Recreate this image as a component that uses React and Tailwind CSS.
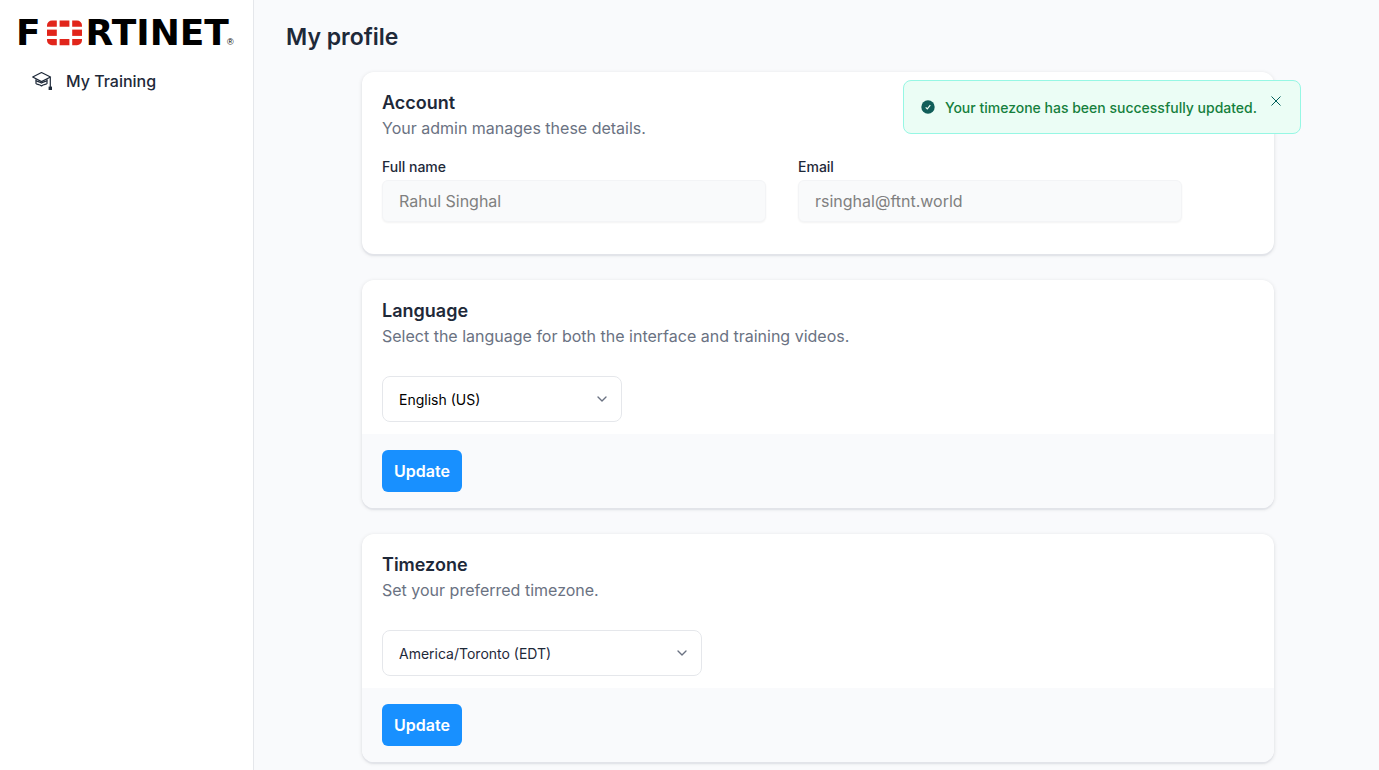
import React, { useState } from 'react';
import { ChevronDown } from 'lucide-react';

function Logo() {
  return (
    <a
      href="#"
      aria-label="Fortinet"
      className="flex items-start font-['DejaVu_Sans'] text-4xl leading-[26px] font-bold text-black"
    >
      <span>F</span>
      <svg className="mr-1 ml-1.5 h-[26px] w-[35px] shrink-0" viewBox="0 0 35 26" fill="#e1251b">
        <path d="M5 0.500h4.800v6.200H0V5.500a5 5 0 0 1 5-5z" />
        <path d="M12.600 0.500h9.800v6.200h-9.800z" />
        <path d="M25.200 0.500H30a5 5 0 0 1 5 5v1.200h-9.800z" />
        <path d="M0 9.600h9.800v6.300H0z" />
        <path d="M25.200 9.600H35v6.300h-9.800z" />
        <path d="M0 18.900h9.800v6.300H5a5 5 0 0 1-5-5z" />
        <path d="M12.600 18.900h9.800v6.300h-9.800z" />
        <path d="M25.200 18.900H35v1.300a5 5 0 0 1-5 5h-4.800z" />
      </svg>
      <span>RTINET</span>
      <span className="-ml-0.5 self-end font-['Liberation_Sans'] text-[9px] leading-2 font-normal">®</span>
    </a>
  );
}

function GraduationIcon() {
  return (
    <svg
      className="h-5 w-5"
      viewBox="0 0 20 20"
      fill="none"
      stroke="currentColor"
      strokeWidth="1.2"
      strokeLinejoin="round"
    >
      <path d="M9.500 1.500 18.500 6l-9 4.600L.7 6z" />
      <path d="M4 9.500c.3 1 2.500.6 5.500 2.600 3-2 5.200-1.600 5.500-2.600" />
      <path d="M4 8.200v4.300c.8 1.200 3 .5 5.500 2.500 2.500-2 4.700-1.300 5.500-2.500V8.200" />
      <path d="M18.300 6.300V16" />
      <path d="M16.600 15.600H20V19h-3.400z" fill="currentColor" stroke="none" />
    </svg>
  );
}

function Card({ title, description, footer, children }) {
  return (
    <section className="overflow-hidden rounded-xl bg-white shadow-[0_2px_1px_#e2e4e9,0_1px_4px_rgba(0,0,0,0.12)]">
      <div className="px-5 pt-[18px]">
        <h2 className="text-lg leading-[26px] font-semibold text-gray-800">{title}</h2>
        <p className="text-base leading-6 text-gray-500">{description}</p>
        {children}
      </div>
      {footer && <div className="bg-[#f9fafc] px-5 py-4">{footer}</div>}
    </section>
  );
}

function ReadOnlyField({ id, label, value }) {
  return (
    <div>
      <label htmlFor={id} className="block text-sm leading-[18px] font-medium text-gray-800">
        {label}
      </label>
      <input
        id={id}
        value={value}
        disabled
        className="mt-1 block h-[42px] w-full rounded-md border border-gray-100 bg-[#f9fafb] px-4 text-base text-[#808080] shadow-xs"
      />
    </div>
  );
}

function SelectField({ label, value, className }) {
  return (
    <div className={`relative mt-7 mb-3 ${className}`}>
      <select
        aria-label={label}
        defaultValue={value}
        className="block h-[46px] w-full appearance-none rounded-lg border border-gray-200 bg-white px-4 pt-0.5 text-sm"
      >
        <option>{value}</option>
      </select>
      <ChevronDown className="pointer-events-none absolute top-[15px] right-3 h-4 w-4 text-gray-500" />
    </div>
  );
}

function UpdateButton() {
  return (
    <button type="button" className="h-[42px] rounded-md bg-[#1890ff] px-3 text-base font-semibold text-white">
      Update
    </button>
  );
}

function Toast({ message, onClose }) {
  return (
    <div
      role="status"
      className="absolute top-20 right-[78px] flex items-start rounded-lg border border-teal-200 bg-[#ebfdf5] px-[17px] pt-4 pb-3.5"
    >
      <svg className="mt-[3px] h-3.5 w-3.5" viewBox="0 0 14 14" fill="none">
        <circle cx="7" cy="7" r="6.700" fill="#115e59" />
        <path d="M4.700 7.300 6.300 8.900 9.300 5.200" stroke="#ebfdf5" strokeWidth="1.200" />
      </svg>
      <p className="ml-2.5 text-sm leading-[22px] font-medium text-[#15803d]">{message}</p>
      <button type="button" aria-label="Close" onClick={onClose} className="-mt-[7px] ml-3 py-1 text-teal-800">
        <svg className="h-3.5 w-3.5" viewBox="0 0 14 14" stroke="currentColor" strokeWidth="1">
          <path d="M2.500 2.500l9 9M11.500 2.500l-9 9" />
        </svg>
      </button>
    </div>
  );
}

export default function App() {
  const [showToast, setShowToast] = useState(true);

  return (
    <div className="relative flex min-h-screen bg-[#f9fafc] font-['Inter',sans-serif] text-gray-800">
      <aside className="w-[254px] shrink-0 border-r border-gray-200 bg-white pt-5">
        <div className="pl-4">
          <Logo />
        </div>
        <nav className="mt-[23px] px-8">
          <a href="#" className="flex items-center gap-3.5 text-base leading-6 font-medium">
            <GraduationIcon />
            My Training
          </a>
        </nav>
      </aside>

      <main className="min-w-0 flex-1 px-8 pt-5 pb-2">
        <h1 className="text-[23px] leading-[34px] font-semibold">My profile</h1>

        <div className="mt-[18px] pl-[3px]">
          <div className="mx-auto flex max-w-[912px] flex-col gap-[26px]">
            <Card title="Account" description="Your admin manages these details.">
              <div className="mt-[18px] grid max-w-[800px] grid-cols-2 gap-8 pb-8">
                <ReadOnlyField id="full-name" label="Full name" value="Rahul Singhal" />
                <ReadOnlyField id="email" label="Email" value="rsinghal@ftnt.world" />
              </div>
            </Card>

            <Card
              title="Language"
              description="Select the language for both the interface and training videos."
              footer={<UpdateButton />}
            >
              <SelectField label="Language" value="English (US)" className="w-60 text-black" />
            </Card>

            <Card title="Timezone" description="Set your preferred timezone." footer={<UpdateButton />}>
              <SelectField label="Timezone" value="America/Toronto (EDT)" className="w-80" />
            </Card>
          </div>
        </div>
      </main>

      {showToast && (
        <Toast message="Your timezone has been successfully updated." onClose={() => setShowToast(false)} />
      )}
    </div>
  );
}
